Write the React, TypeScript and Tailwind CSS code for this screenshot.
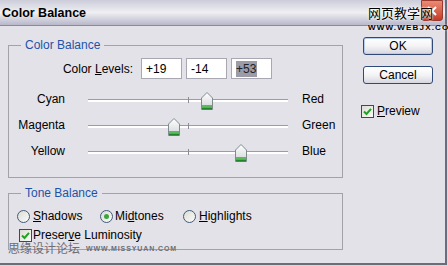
import React from "react";

const font = "font-['Liberation_Sans','Noto_Sans_CJK_SC',Arial,sans-serif]";

function Check() {
  return (
    <span className="flex h-[13px] w-[13px] items-center justify-center border border-[#1c5180] bg-linear-to-br from-[#dcdcd6] to-[#fbfbf9]">
      <svg width="11" height="11" viewBox="0 0 11 11">
        <path d="M2 5.5 L4.5 8 L9 2.8" fill="none" stroke="#21a121" strokeWidth="2" />
      </svg>
    </span>
  );
}

function Radio({ on }: { on?: boolean }) {
  return (
    <span className="flex h-[13px] w-[13px] items-center justify-center rounded-full border border-[#3f5a7a] bg-linear-to-br from-[#dcdcd6] to-[#fbfbf9]">
      {on && <span className="h-[5px] w-[5px] rounded-full bg-[#3ca63c]" />}
    </span>
  );
}

function Thumb({ id }: { id: string }) {
  return (
    <svg width="12" height="18" viewBox="0 0 12 18">
      <defs>
        <linearGradient id={id} x1="0" y1="0" x2="0" y2="1">
          <stop offset="0" stopColor="#ffffff" />
          <stop offset="1" stopColor="#d2d4d8" />
        </linearGradient>
      </defs>
      <path d="M0.5 6 L6 0.5 L11.5 6 L11.5 17.5 L0.5 17.5 Z" fill={`url(#${id})`} stroke="#7f8c8e" />
      <rect x="1" y="13" width="10" height="2.5" fill="#5cba5c" />
      <rect x="1" y="15.5" width="10" height="2" fill="#23822e" />
    </svg>
  );
}

function Slider({ left, right, value, id }: { left: string; right: string; value: number; id: string }) {
  const x = ((value + 100) / 200) * 200 - 6;
  return (
    <div className="flex h-[26px] items-start">
      <div className="w-[56px] pt-[5px] text-right leading-[14px]">{left}</div>
      <div className="relative ml-[23px] h-[26px] w-[200px]">
        <div className="absolute top-[12px] h-[3px] w-full border-t border-[#9c9ca4] bg-white" />
        <div className="absolute left-[100px] top-[10px] h-[6px] w-[1px] bg-[#8c8c94]" />
        <div className="absolute top-[5px]" style={{ left: x }}>
          <Thumb id={id} />
        </div>
      </div>
      <div className="ml-[14px] pt-[5px] leading-[14px]">{right}</div>
    </div>
  );
}

function Field({ value, selected }: { value: string; selected?: boolean }) {
  return (
    <div className="flex h-[21px] w-[41px] items-center border border-[#a9a8b2] bg-white pl-[4px] leading-[16px]">
      {selected ? <span className="bg-[#9c9ca8] text-[#222] pr-[1px]">{value}</span> : value}
    </div>
  );
}

function Button({ label, main }: { label: string; main?: boolean }) {
  return (
    <div
      className={
        "flex h-[18px] w-[70px] items-center justify-center rounded-[3px] border border-[#2f4a78] bg-linear-to-b from-white via-[#f4f4f6] to-[#d6d6e0] leading-[14px] " +
        (main ? "shadow-[inset_0_0_0_1px_#b8cdec]" : "")
      }
    >
      {label}
    </div>
  );
}

export default function App() {
  return (
    <div className={`relative h-[266px] w-[448px] overflow-hidden bg-[#d9d9e0] text-[12px] text-black ${font}`}>
      <div className="flex h-[265px] w-[447px] flex-col border-b-[2px] border-r-[2px] border-[#6c6c7a] bg-[#e3e2e9]">
        <div className="flex h-[26px] items-start justify-between border-b border-[#8a8a9c] bg-linear-to-b from-[#cdcdda] via-[#efeff4] to-[#b8b8ca] pl-[2px]">
          <div className="pt-[5px] text-[12.5px] font-bold leading-[16px]">Color Balance</div>
          <div className="mr-[2px] flex h-[21px] w-[22px] items-center justify-center rounded-b-[3px] border border-[#9a3b30] bg-linear-to-b from-[#ec8a74] to-[#c63a26]">
            <svg width="12" height="12" viewBox="0 0 12 12">
              <path d="M2 2 L10 10 M10 2 L2 10" stroke="white" strokeWidth="2" />
            </svg>
          </div>
        </div>

        <div className="flex flex-1">
          <div className="w-[343px] pl-[8px] pt-[12px]">
            <fieldset className="m-0 w-[335px] border border-[#a2a2aa] p-0 pb-[12px]">
              <legend className="ml-[12px] px-[4px] leading-[14px] text-[#1d52a8]">Color Balance</legend>
              <div className="mt-[6px] flex items-center">
                <div className="w-[124px] text-right">
                  Color <span className="underline">L</span>evels:
                </div>
                <div className="ml-[8px] flex gap-[4px]">
                  <Field value="+19" />
                  <Field value="-14" />
                  <Field value="+53" selected />
                </div>
              </div>
              <div className="mt-[8px]">
                <Slider left="Cyan" right="Red" value={19} id="t1" />
                <Slider left="Magenta" right="Green" value={-14} id="t2" />
                <Slider left="Yellow" right="Blue" value={53} id="t3" />
              </div>
            </fieldset>

            <fieldset className="m-0 mt-[8px] w-[335px] border border-[#a2a2aa] p-0 pb-[7px]">
              <legend className="ml-[12px] px-[4px] leading-[14px] text-[#1d52a8]">Tone Balance</legend>
              <div className="mt-[9px] flex h-[14px] items-center pl-[8px]">
                <div className="flex w-[83px] items-center gap-[3px]">
                  <Radio />
                  <span><span className="underline">S</span>hadows</span>
                </div>
                <div className="flex w-[83px] items-center gap-[2px]">
                  <Radio on />
                  <span>Mi<span className="underline">d</span>tones</span>
                </div>
                <div className="flex items-center gap-[3px]">
                  <Radio />
                  <span><span className="underline">H</span>ighlights</span>
                </div>
              </div>
              <div className="mt-[5px] flex h-[14px] items-center gap-[1px] pl-[10px]">
                <Check />
                <span>Preser<span className="underline">v</span>e Luminosity</span>
              </div>
            </fieldset>
          </div>

          <div className="flex flex-col pl-[20px] pt-[11px]">
            <Button label="OK" main />
            <div className="mt-[11px]">
              <Button label="Cancel" />
            </div>
            <div className="-ml-[2px] mt-[18px] flex items-center gap-[3px]">
              <Check />
              <span><span className="underline">P</span>review</span>
            </div>
          </div>
        </div>
      </div>

      <div className="absolute left-[368px] top-[7px] flex flex-col items-start">
        <span className="text-[13px] leading-[14px] text-black [text-shadow:0_0_2px_#fff,0_0_2px_#fff]">网页教学网</span>
        <span className="mt-[2px] text-[8px] font-bold leading-[9px] tracking-[1.2px] text-black [text-shadow:0_0_2px_#fff]">WWW.WEBJX.COM</span>
      </div>
      <div className="absolute left-[8px] top-[242px] flex items-center gap-[6px] text-[#6e6e74]">
        <span className="text-[12px] leading-[14px]">思缘设计论坛</span>
        <span className="text-[7px] font-bold leading-[8px] tracking-[0.9px]">WWW.MISSYUAN.COM</span>
      </div>
    </div>
  );
}
